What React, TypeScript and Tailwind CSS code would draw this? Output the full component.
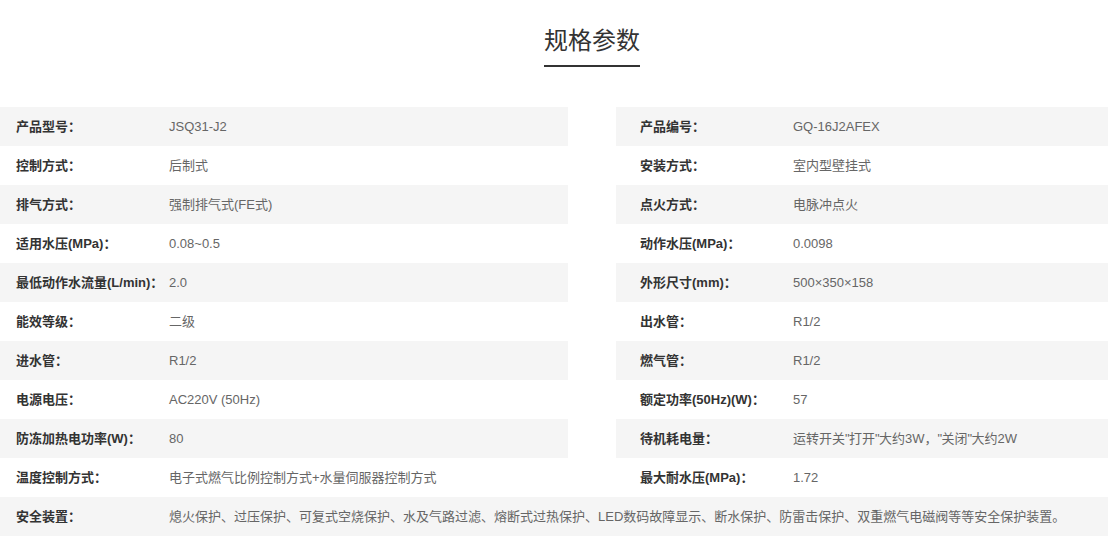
import type { ReactNode } from "react";

const font = { fontFamily: '"Liberation Sans", Arial, "Noto Sans CJK SC", sans-serif' };

// straight quote kept in a latin-only span so it stays narrow next to CJK text
const Q = () => <span className="inline-block w-[4px] text-center font-['Liberation_Sans']">"</span>;

const leftSpecs: [string, ReactNode][] = [
  ["产品型号：", "JSQ31-J2"],
  ["控制方式：", "后制式"],
  ["排气方式：", "强制排气式(FE式)"],
  ["适用水压(MPa)：", "0.08~0.5"],
  ["最低动作水流量(L/min)：", "2.0"],
  ["能效等级：", "二级"],
  ["进水管：", "R1/2"],
  ["电源电压：", "AC220V (50Hz)"],
  ["防冻加热电功率(W)：", "80"],
  ["温度控制方式：", "电子式燃气比例控制方式+水量伺服器控制方式"],
];

const rightSpecs: [string, ReactNode][] = [
  ["产品编号：", "GQ-16J2AFEX"],
  ["安装方式：", "室内型壁挂式"],
  ["点火方式：", "电脉冲点火"],
  ["动作水压(MPa)：", "0.0098"],
  ["外形尺寸(mm)：", "500×350×158"],
  ["出水管：", "R1/2"],
  ["燃气管：", "R1/2"],
  ["额定功率(50Hz)(W)：", "57"],
  [
    "待机耗电量：",
    <>
      运转开关<Q />打开<Q />大约3W，<Q />关闭<Q />大约2W
    </>,
  ],
  ["最大耐水压(MPa)：", "1.72"],
];

function Row({ label, value, gray, pad }: { label: string; value: ReactNode; gray: boolean; pad: string }) {
  return (
    <div className={`flex h-[39px] items-center text-[13px] ${pad} ${gray ? "bg-[#f5f5f5]" : "bg-white"}`}>
      <div className="w-[153px] shrink-0 font-bold text-[#333]">{label}</div>
      <div className="text-[#666]">{value}</div>
    </div>
  );
}

export default function App() {
  return (
    <div className="h-[555px] w-[1108px] bg-white" style={font}>
      {/* Title */}
      <div className="flex justify-center pl-[76px] pt-[25px]">
        <div className="flex flex-col items-center">
          <h2 className="text-[24px] leading-[32px] text-[#333]">规格参数</h2>
          <div className="mt-[8px] h-[2px] w-[96px] bg-[#333]" />
        </div>
      </div>

      {/* Spec table */}
      <div className="mt-[40px] flex justify-between">
        <div className="w-[568px]">
          {leftSpecs.map(([l, v], i) => (
            <Row key={l} label={l} value={v} gray={i % 2 === 0} pad="pl-[16px]" />
          ))}
        </div>
        <div className="w-[492px]">
          {rightSpecs.map(([l, v], i) => (
            <Row key={l} label={l} value={v} gray={i % 2 === 0} pad="pl-[24px]" />
          ))}
        </div>
      </div>
      <Row
        label="安全装置："
        value="熄火保护、过压保护、可复式空烧保护、水及气路过滤、熔断式过热保护、LED数码故障显示、断水保护、防雷击保护、双重燃气电磁阀等等安全保护装置。"
        gray
        pad="pl-[16px]"
      />
    </div>
  );
}
